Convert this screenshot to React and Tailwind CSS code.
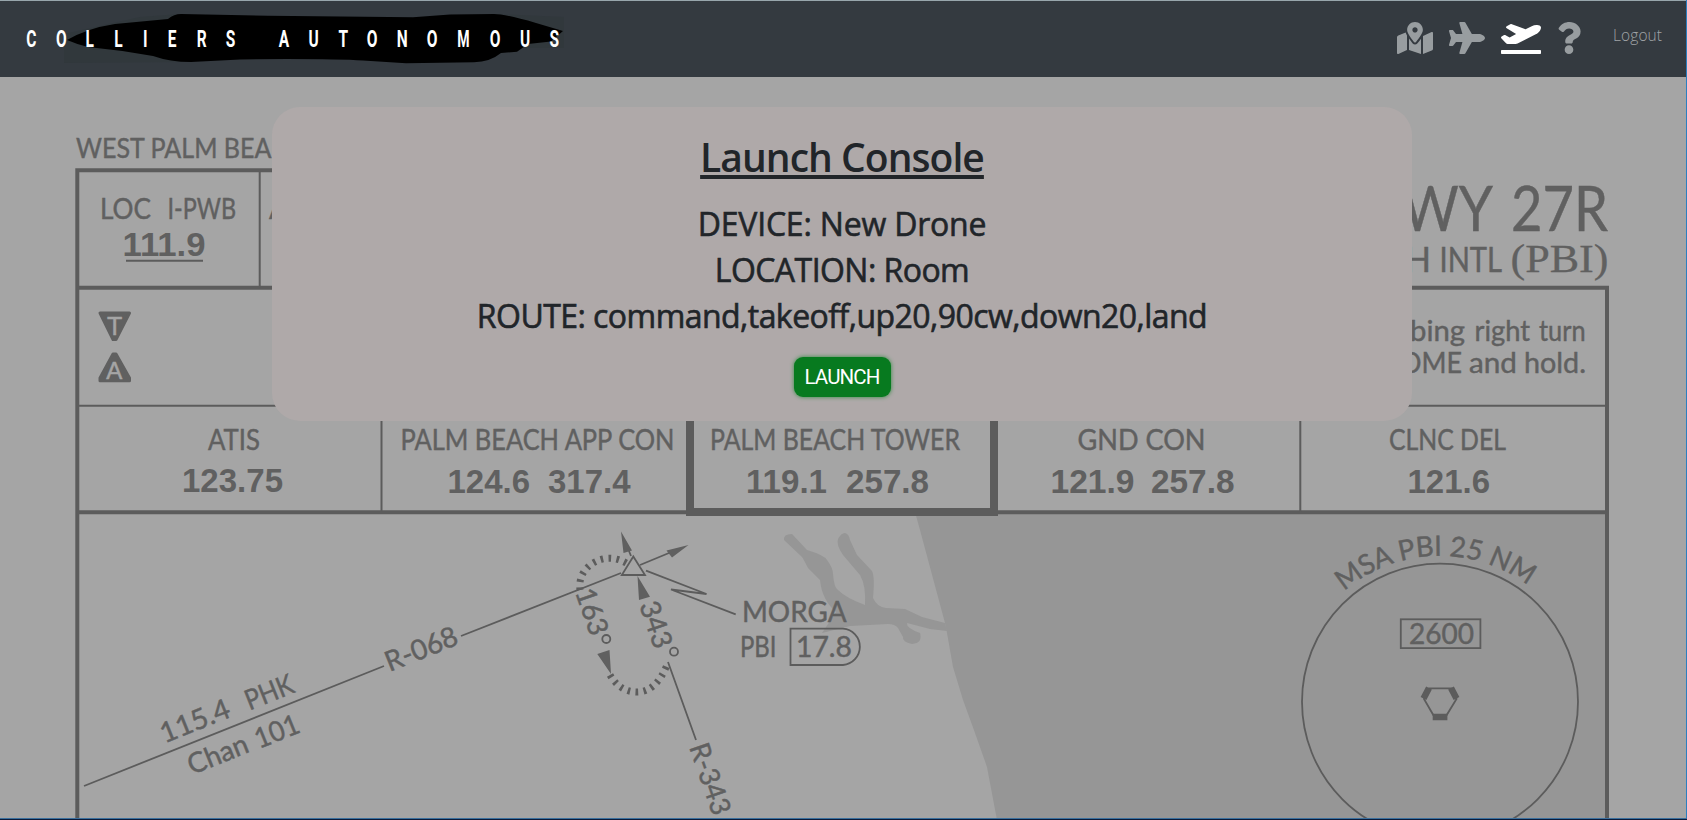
import React from "react";
import { FaMapMarkedAlt, FaPlane, FaPlaneDeparture, FaQuestion } from "react-icons/fa";

const INK = "#606060";
const RULE = "#5c5c5c";

// One label on the approach chart: [text, left, right, baseline, size]
const labels = [
  ["WEST PALM BEA", 76, 271.5, 157.7, 27.8],
  ["LOC", 100, 151, 218.7, 28],
  ["I-PWB", 167.5, 236, 218.7, 28],
  ["A", 269, 288, 218.7, 28],
  ["ATIS", 208, 260, 450.3, 28],
  ["PALM BEACH APP CON", 400.5, 674.5, 450.3, 28],
  ["PALM BEACH TOWER", 710, 960, 450.3, 28],
  ["GND CON", 1077.5, 1205.5, 450.3, 28],
  ["CLNC DEL", 1389, 1506, 450.3, 28],
  ["WY", 1402, 1493, 230.7, 61],
  ["27R", 1511, 1608, 230.7, 61],
  ["H", 1405, 1431, 272, 34],
  ["INTL", 1439.5, 1502, 272, 34],
  ["bing", 1410, 1465, 341, 29.5],
  ["right", 1474.5, 1530, 341, 29.5],
  ["turn", 1539, 1585.5, 341, 29.5],
  ["DME", 1401, 1462, 372.5, 28.5],
  ["and", 1469, 1517, 372.5, 29.5],
  ["hold.", 1524, 1586, 372.5, 29.5],
  ["MORGA", 742, 846.5, 622, 28],
  ["PBI", 740, 776.5, 657, 28],
  ["17.8", 796, 852, 657, 28],
  ["2600", 1409, 1474, 643.7, 28],
];

const frequencies = [
  ["111.9", 122.5, 205.5, 256],
  ["123.75", 182, 283, 491.5],
  ["124.6", 447.5, 530, 492.5],
  ["317.4", 548, 630.5, 492.5],
  ["119.1", 746, 827, 492.5],
  ["257.8", 846, 929, 492.5],
  ["121.9", 1050.5, 1134.5, 492.5],
  ["257.8", 1151, 1234.5, 492.5],
  ["121.6", 1407.5, 1490, 492.5],
];

// Labels that run along a radial: [text, x, y, angle, length]
const radials = [
  ["115.4", 164.5, 743.5, -21.8, 73],
  ["PHK", 249.5, 710.5, -21.8, 50],
  ["Chan", 192, 775, -21.8, 63],
  ["101", 259, 749, -21.8, 46],
  ["R-068", 389.5, 672, -21.8, 76],
  ["163", 575, 592, 71, 48],
  ["343", 639, 605, 71, 48],
  ["R-343", 689, 747, 71, 74],
];

const brandX = [26.3, 55.9, 85.6, 114.3, 143, 167.7, 196.7, 225.7, 278.8, 308.5, 338.4, 366.8, 396.7, 426.8, 457.3, 489.8, 520, 549.6];

function Chart() {
  return (
    <svg className="absolute inset-0" width="1687" height="820" viewBox="0 0 1687 820" fontFamily="Lato, sans-serif" fill={INK}>
      <path
        fill="#969696"
        d="M915 512 920 530 945 623 947 633 953 667 963 700 975 733 987 767 997 820H1606V512Z"
      />
      <path
        fill="#969696"
        d="M784 540Q783 534 792 534L807 550Q824 555 827 560 833 568 833 574 834 588 838 590 846 598 865 605 866 585 860 575L843 555Q836 545 838 539 841 533 845 533 849 534 850 540L857 555 872 571Q875 577 873 598 877 607 886 608L905 609 922 617 945 623 947 631 930 629 907 623Q906 628 920 633 923 643 912 644 902 642 903 637L898 628Q895 624 888 624L850 626 822 633 836 612Q822 600 820 580L808 568Q804 560 802 557Z"
      />

      <g fill="none" stroke={RULE}>
        <path strokeWidth="4" d="M77.3 820V170.2H400M77 287.7H1607V820M77 512.3H1607" />
        <path strokeWidth="2" d="M259.7 171V288M77 405.8H1607M381.5 406V512M1300.3 406V512M126 260.8H203" />
        <path strokeWidth="8" d="M690 400V512H994V400" />
        <g strokeWidth="1.8">
          <path d="M84 786 384 666M461 636 621 573M640 565 675 550.5M631 556 625 541M646 570.7 706.5 594 671 589.5 735.7 614.3M668 662 696 740" />
          <path d="M633.3 556.5 621.8 575H645Z" />
          <path d="M790.5 628.7H843A18.2 18.2 0 0 1 843 665H790.5Z" />
          <circle cx="1440" cy="701.7" r="138" />
          <rect x="1400.8" y="619.3" width="79.6" height="28.8" />
          <circle cx="606.3" cy="639" r="4" />
          <circle cx="674" cy="651.7" r="4" />
          <path d="M1429 688.3H1451.7L1456.5 699 1446.7 715H1433.3L1424 699Z" />
        </g>
        <path strokeWidth="7" strokeDasharray="2.6 5.4" d="M580 590Q578 573 593 563 610 553 628 564" />
        <path strokeWidth="7" strokeDasharray="2.6 5.4" d="M610 675Q620 692 637 692 656 692 667 665" />
        <path strokeWidth="6.5" d="M1429 688 1423.5 698.5M1451 688 1456.5 698.5M1432.7 717H1447.4" />
      </g>

      <path d="M621 531.5 623.5 553 632 550.5ZM688.5 545 666.5 550.5 672 557.5ZM637.5 576 639 600 650 596.7ZM611 674 597.3 654 609.5 650Z" />

      <path stroke={INK} strokeWidth="3" strokeLinejoin="round" d="M100 313H129.5L116 339.5H113Z" />
      <path stroke={INK} strokeWidth="3" strokeLinejoin="round" d="M100 380.8H129.5V378L116 354H113L100 378Z" />
      <g fontFamily="Liberation Sans, sans-serif" fill="#a5a5a5" stroke="#a5a5a5" strokeWidth="0.5" textAnchor="middle">
        <text x="114.7" y="334.5" fontSize="25">T</text>
        <text x="114.3" y="379" fontSize="24">A</text>
      </g>

      <g stroke={INK} strokeWidth="0.45">
        {labels.map(([text, x1, x2, y, size]) => (
          <text key={text + x1} x={x1} y={y} fontSize={size} textLength={x2 - x1} lengthAdjust="spacingAndGlyphs">
            {text}
          </text>
        ))}
        {radials.map(([text, x, y, angle, length]) => (
          <text key={text} transform={`translate(${x} ${y}) rotate(${angle})`} fontSize="28" textLength={length} lengthAdjust="spacingAndGlyphs">
            {text}
          </text>
        ))}
        <path id="msa-arc" fill="none" stroke="none" d="M1344 591.5A146 146 0 0 1 1548 604" />
        <text fontSize="28">
          <textPath href="#msa-arc" textLength="199" lengthAdjust="spacingAndGlyphs">
            MSA PBI 25 NM
          </textPath>
        </text>
      </g>
      <text x="1510.5" y="271.7" fontSize="39" fontFamily="Liberation Serif, serif" stroke={INK} strokeWidth="0.3" textLength="98" lengthAdjust="spacingAndGlyphs">
        (PBI)
      </text>
      {frequencies.map(([text, x1, x2, y]) => (
        <text
          key={text + x1}
          x={x1}
          y={y}
          fontSize="33.5"
          fontWeight="700"
          fontFamily="Liberation Sans, sans-serif"
          textLength={x2 - x1}
          lengthAdjust="spacingAndGlyphs"
        >
          {text}
        </text>
      ))}
    </svg>
  );
}

function Brand() {
  return (
    <svg className="h-[76px] w-[600px] shrink-0" viewBox="0 1 600 76">
      <path fill="#31383c" d="M64 63V34L140 17 180 14V62ZM494 14 564 17V48H510Z" />
      <path d="M67 40Q88 28 115 24L168 19Q174 14 181 14L268 15.7 413 17.3 450 14.5 494 14Q505 14 536 23L563 31 551 41.5 528 44 517 51.7 501 53Q490 62 474 62.3L406 63.3 363 60.5Q340 59 287 59L240 59.5 191 62Q170 62 153 56 120 50 88 47 76 44 67 40Z" />
      <g fill="#fff" fontFamily="Roboto, sans-serif" fontWeight="700" fontSize="23.5">
        {"COLLIERSAUTONOMOUS".split("").map((letter, i) => (
          <text key={i} transform={`translate(${brandX[i]} 46.5) scale(${letter === "M" ? 0.6 : 0.66} 1)`}>
            {letter}
          </text>
        ))}
      </g>
    </svg>
  );
}

export default function App() {
  return (
    <div className="relative flex h-[820px] w-[1687px] flex-col overflow-hidden bg-[#a5a5a5] font-['Open_Sans',sans-serif]">
      <Chart />
      <header className="relative flex h-[77px] shrink-0 items-start justify-between border-t border-[#98a6ac] bg-[#343a40]">
        <Brand />
        <nav className="flex gap-4 pt-[21px] pr-[22px] text-[#989da0]">
          <FaMapMarkedAlt className="h-8 w-9" />
          <FaPlane className="h-8 w-9" />
          <FaPlaneDeparture className="h-8 w-10 text-white" />
          <FaQuestion className="h-8 w-6" />
          <a className="ml-4 w-[52px] pt-px text-[15.5px] leading-6 font-light tracking-[0.1px] whitespace-nowrap text-[#a0a4a7]">Logout</a>
        </nav>
      </header>

      <main className="relative mt-[30px] ml-[272px] flex h-[314px] w-[1140px] flex-col items-center rounded-[28px] bg-[#afa9a9] pt-[26px] text-[#212529]">
        <h1 className="mb-2 text-[39px] leading-[48px] font-semibold tracking-[-0.95px] whitespace-nowrap underline decoration-[4px] underline-offset-[3px] [text-decoration-skip-ink:none]">
          Launch Console
        </h1>
        <div className="mt-4 flex flex-col items-center gap-2 text-[32px] leading-[38px] font-medium tracking-[-0.55px] whitespace-nowrap [-webkit-text-stroke:0.6px_#212529]">
          <h3 className="tracking-[-0.2px]">DEVICE: New Drone</h3>
          <h3>LOCATION: Room</h3>
          <h3>ROUTE: command,takeoff,up20,90cw,down20,land</h3>
        </div>
        <button className="mt-[22px] h-10 w-[97px] shrink-0 rounded-[9px] bg-[#077a1f] font-['Roboto',sans-serif] text-[20.5px] tracking-[-0.9px] whitespace-nowrap text-white shadow-[0_0_4px_#2f8a40]">
          LAUNCH
        </button>
      </main>

      <div className="absolute top-0 right-0 h-full w-px bg-[#2a7fc0]" />
      <div className="absolute bottom-0 left-0 h-[2px] w-full border-t border-[#3a6f9c] bg-[#0a1a3a]" />
    </div>
  );
}
